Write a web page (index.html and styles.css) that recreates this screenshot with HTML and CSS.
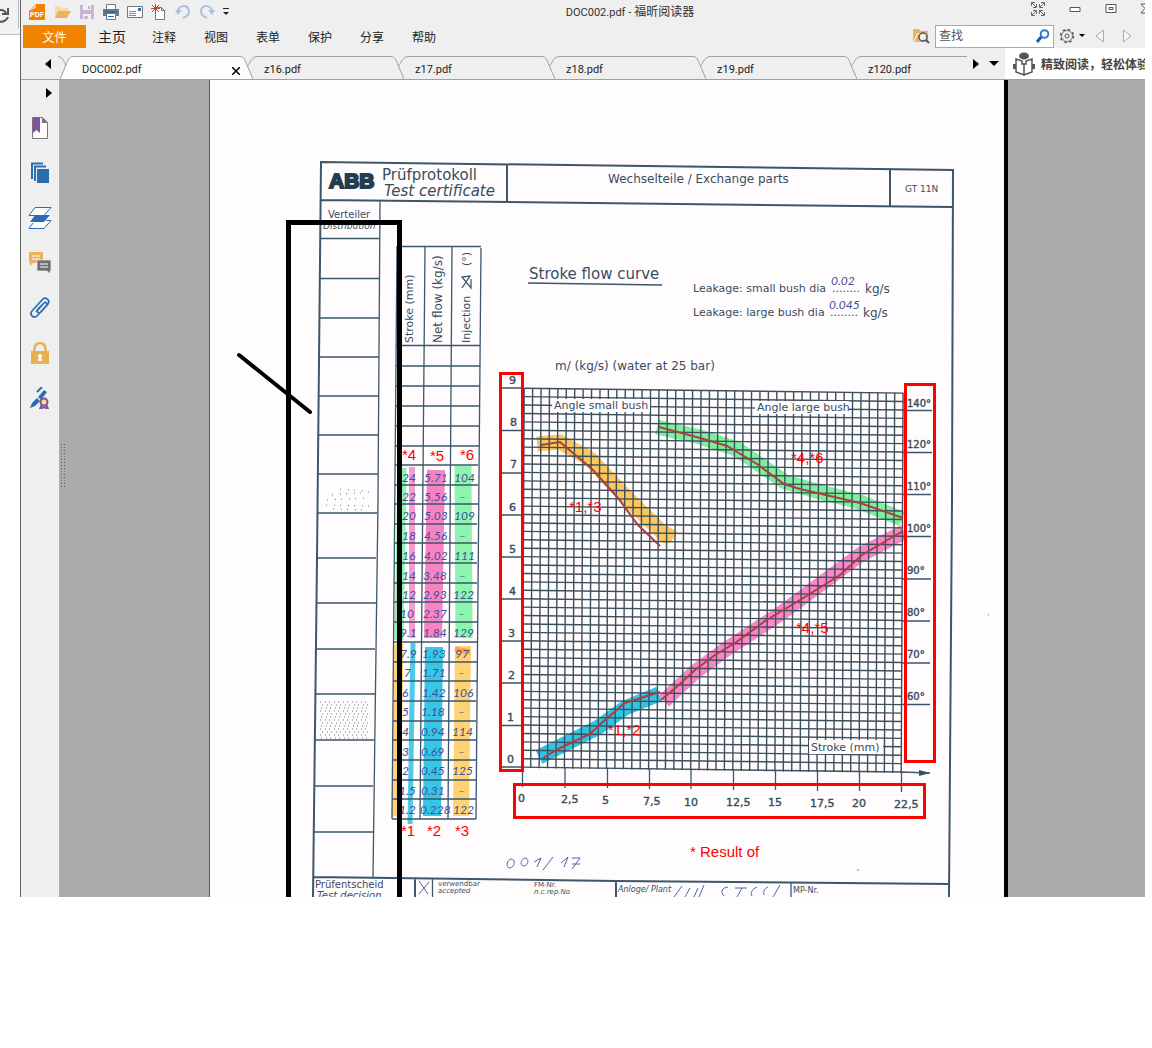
FILE: index.html
```
<!DOCTYPE html>
<html lang="zh-CN">
<head>
<meta charset="utf-8">
<title>DOC002.pdf - 福昕阅读器</title>
<link rel="stylesheet" href="styles.css">
</head>
<body>
<div class="desktop">
  <div class="behind">
    <div class="behind-bar">
      <svg width="20" height="34" viewBox="0 0 20 34"><path d="M-4 13C-2 9 4 9 6 13M8 8v6H2M8 17C6 22 0 23 -3 20" fill="none" stroke="#555" stroke-width="2"/><path d="M18.500 0v28" stroke="#bbb"/></svg>
    </div>
  </div>
  <div class="reader">
    <header class="title-bar">
      <div class="quick">
        <svg width="19" height="18" viewBox="0 0 19 18"><path d="M1 8L8 1h9v16H1z" fill="#f08300"/><path d="M1 8L8 1v4z" fill="#ffc98a"/><text x="2" y="14" class="logo-text">PDF</text></svg>
        <button aria-label="打开"><svg width="16" height="16" viewBox="0 0 16 16"><path d="M0 14V2h5l2 2h6v3H4z" fill="#f7d9a8"/><path d="M3 7h13l-4 7H0z" fill="#e9b35f"/></svg></button>
        <button aria-label="保存"><svg width="16" height="16" viewBox="0 0 16 16"><path d="M1 1h14v14H1z" fill="#c9b3d6"/><path d="M4 1h8v5H4zM4 10h8v5H4z" fill="#efefef"/><path d="M9 2h2v3H9zM5 12h4v3H5z" fill="#c9b3d6"/></svg></button>
        <button aria-label="打印"><svg width="16" height="16" viewBox="0 0 16 16"><path d="M3.500 0.500h9v5h-9z" fill="#fff" stroke="#777"/><path d="M0 5h16v7H0z" fill="#777"/><path d="M2 7h12v2H2z" fill="#2b6cb0"/><path d="M3.500 9.500h9v6h-9z" fill="#fff" stroke="#777"/><path d="M5 12.500h6" stroke="#2b6cb0"/></svg></button>
        <button aria-label="邮件"><svg width="16" height="16" viewBox="0 0 16 16"><path d="M.5 2.500h15v11H.5z" fill="#fff" stroke="#777"/><path d="M2 7.500h7M2 9.500h7M2 11.500h7" stroke="#888"/><path d="M11 4h3v3h-3z" fill="#2b6cb0"/></svg></button>
        <button aria-label="新建"><svg width="16" height="16" viewBox="0 0 16 16"><path d="M4.500 3.500h6l3 3v9h-9z" fill="#fff" stroke="#777"/><path d="M10.500 3.500v3h3" fill="none" stroke="#777"/><path d="M4.500 0v9M0 4.500h9M1 1l7 7M8 1L1 8" stroke="#d0402b"/></svg></button>
        <button aria-label="撤销"><svg width="16" height="16" viewBox="0 0 16 16"><path d="M3 7C4 1 13 0 14 7C14 11 11 13 8 14" fill="none" stroke="#a9c1dc" stroke-width="2"/><path d="M0 6h7l-4 5z" fill="#a9c1dc"/></svg></button>
        <button aria-label="重做"><svg width="16" height="16" viewBox="0 0 16 16"><path d="M13 7C12 1 3 0 2 7C2 11 5 13 8 14" fill="none" stroke="#a9c1dc" stroke-width="2"/><path d="M16 6H9l4 5z" fill="#a9c1dc"/></svg></button>
        <button aria-label="自定义"><svg width="6" height="8" viewBox="0 0 6 8"><path d="M0 .5h6" stroke="#222"/><path d="M0 4h6L3 7z" fill="#222"/></svg></button>
      </div>
      <div class="window-title"><span class="file-name">DOC002.pdf -</span> 福昕阅读器</div>
      <div class="window-buttons">
        <button aria-label="全屏"><svg width="14" height="14" viewBox="0 0 14 14"><path d="M.5 4V.5H4M1 1l4 4M2 5.500h3.500V2M13.500 4V.5H10M13 1L9 5M12 5.500H8.500V2M.5 10v3.500H4M1 13l4-4M2 8.500h3.500V12M13.500 10v3.500H10M13 13L9 9M12 8.500H8.500V12" fill="none" stroke="#667"/></svg></button>
        <button aria-label="最小化"><svg width="12" height="14" viewBox="0 0 12 14"><path d="M1 5.500h10v4H1z" fill="#fff" stroke="#555"/></svg></button>
        <button aria-label="最大化"><svg width="12" height="14" viewBox="0 0 12 14"><path d="M1 2.500h10v8H1zM4 5.500h4v2H4z" fill="#fff" stroke="#555"/></svg></button>
        <button aria-label="关闭"><svg width="4" height="14" viewBox="0 0 4 14"><path d="M4 2H0l4 4.500L0 11h4" fill="#fff" stroke="#555"/></svg></button>
      </div>
    </header>
    <nav class="menu-bar">
      <button class="file">文件</button>
      <button class="menu home">主页</button>
      <button class="menu">注释</button>
      <button class="menu">视图</button>
      <button class="menu">表单</button>
      <button class="menu">保护</button>
      <button class="menu">分享</button>
      <button class="menu">帮助</button>
      <div class="search-tools">
        <svg width="17" height="16" viewBox="0 0 17 16"><path d="M0 1h6l2 2h7v11H0z" fill="#e9b35f"/><path d="M1 14L4 6h10" stroke="#fff" fill="none"/><circle cx="10" cy="9" r="4" fill="#eee" stroke="#555" stroke-width="1.500"/><path d="M13 12l3 3" stroke="#555" stroke-width="2"/></svg>
        <label class="search">
          <input type="text" placeholder="查找" aria-label="查找">
          <svg width="14" height="14" viewBox="0 0 14 14"><path d="M1 13l5-6" stroke="#1c5fae" stroke-width="3"/><circle cx="8.500" cy="5" r="3.800" fill="#fff" stroke="#2f7fce" stroke-width="2"/></svg>
        </label>
        <button class="gear" aria-label="设置"><svg width="26" height="16" viewBox="0 0 26 16"><circle cx="8" cy="8" r="6.500" fill="none" stroke="#556" stroke-width="1.500" stroke-dasharray="2.600 2.500"/><circle cx="8" cy="8" r="5.500" fill="#efefef" stroke="#556" stroke-width=".8"/><circle cx="8" cy="8" r="2" fill="none" stroke="#556"/><path d="M20 6h6l-3 3z" fill="#000"/></svg></button>
        <button aria-label="上一个"><svg width="9" height="14" viewBox="0 0 9 14"><path d="M8.500 1v12L1 7z" fill="#f6f6f6" stroke="#aaa"/></svg></button>
        <button aria-label="下一个"><svg width="9" height="14" viewBox="0 0 9 14"><path d="M.5 1v12L8 7z" fill="#f6f6f6" stroke="#aaa"/></svg></button>
      </div>
    </nav>
    <div class="tab-bar">
      <button class="scroll-left" aria-label="向左"><svg width="6" height="10" viewBox="0 0 6 10"><path d="M6 0v10L0 5z"/></svg></button>
      <svg class="stub" width="9" height="23" viewBox="0 0 9 23"><path d="M0 .5C5 1 6 6 9 11" class="edge"/></svg>
      <div class="tabs">
        <div class="tab active">
          <svg width="13" height="23" viewBox="0 0 13 23"><path d="M0 23L6 9C8 4 9 .5 13 .5V23z" class="fill"/><path d="M0 23L6 9C8 4 9 .5 13 .5" class="edge"/></svg>
          <a href="#doc">DOC002.pdf</a>
          <button aria-label="关闭标签"><svg width="8" height="8" viewBox="0 0 8 8"><path d="M0 0l8 8M8 0L0 8" stroke="#000" stroke-width="1.500"/></svg></button>
          <svg width="13" height="23" viewBox="0 0 13 23"><path d="M0 .5C4 .5 5 4 7 9L13 23H0z" class="fill"/><path d="M0 .5C4 .5 5 4 7 9L13 23" class="edge"/></svg>
        </div>
        <div class="tab"><svg width="11" height="23" viewBox="0 0 11 23"><path d="M0 11C4 5 5 .5 11 .5" class="edge"/></svg><a href="#z16">z16.pdf</a><svg width="13" height="23" viewBox="0 0 13 23"><path d="M0 .5C4 .5 5 4 7 9L13 23" class="edge"/></svg></div>
        <div class="tab"><svg width="11" height="23" viewBox="0 0 11 23"><path d="M0 11C4 5 5 .5 11 .5" class="edge"/></svg><a href="#z17">z17.pdf</a><svg width="13" height="23" viewBox="0 0 13 23"><path d="M0 .5C4 .5 5 4 7 9L13 23" class="edge"/></svg></div>
        <div class="tab"><svg width="11" height="23" viewBox="0 0 11 23"><path d="M0 11C4 5 5 .5 11 .5" class="edge"/></svg><a href="#z18">z18.pdf</a><svg width="13" height="23" viewBox="0 0 13 23"><path d="M0 .5C4 .5 5 4 7 9L13 23" class="edge"/></svg></div>
        <div class="tab"><svg width="11" height="23" viewBox="0 0 11 23"><path d="M0 11C4 5 5 .5 11 .5" class="edge"/></svg><a href="#z19">z19.pdf</a><svg width="13" height="23" viewBox="0 0 13 23"><path d="M0 .5C4 .5 5 4 7 9L13 23" class="edge"/></svg></div>
        <div class="tab last"><svg width="11" height="23" viewBox="0 0 11 23"><path d="M0 11C4 5 5 .5 11 .5" class="edge"/></svg><a href="#z120">z120.pdf</a></div>
      </div>
      <div class="tab-tools">
        <button aria-label="向右"><svg width="6" height="10" viewBox="0 0 6 10"><path d="M0 0v10l6-5z"/></svg></button>
        <button aria-label="标签列表"><svg width="10" height="5" viewBox="0 0 10 5"><path d="M0 0h10L5 5z"/></svg></button>
      </div>
      <div class="banner">
        <svg width="22" height="24" viewBox="0 0 22 24"><ellipse cx="11" cy="4" rx="5" ry="3.500" fill="#555"/><path d="M3 7l6 2v3h4V9l6-2v13l-8 3-8-3zM11 12v10" fill="#fff" stroke="#555" stroke-width="1.500"/><path d="M0 12h3v5H0zM19 12h3v5h-3z" fill="#555"/></svg>
        <span>精致阅读，轻松体验</span>
      </div>
    </div>
    <main class="work">
      <aside class="side">
        <button class="expand" aria-label="展开"><svg width="6" height="10" viewBox="0 0 6 10"><path d="M0 0v10l6-5z"/></svg></button>
        <button aria-label="书签"><svg width="18" height="22" viewBox="0 0 18 22"><path d="M1.500.500h10l5 5v16h-15z" fill="#fff" stroke="#777"/><path d="M11 0l6 6h-6z" fill="#777"/><path d="M2 0h7v16l-3.500-3L2 16z" fill="#8353a3"/></svg></button>
        <button aria-label="页面"><svg width="20" height="22" viewBox="0 0 20 22"><path d="M2 17V1.500h11M5 19V4.500h11" fill="none" stroke="#2c6cb0" stroke-width="2"/><path d="M7 7h12v14H7z" fill="#2c6cb0"/></svg></button>
        <button aria-label="图层"><svg width="24" height="22" viewBox="0 0 24 22"><path d="M7 13.500h16l-7 8H1z" fill="#fff" stroke="#2c6cb0"/><path d="M7 7.500h16l-7 8H1z" fill="#2c6cb0" stroke="#fff"/><path d="M7 .5h16l-7 8H1z" fill="#fff" stroke="#2c6cb0"/></svg></button>
        <button aria-label="注释"><svg width="22" height="22" viewBox="0 0 22 22"><path d="M0 0h14v11H4l-3 3v-3H0z" fill="#e9b35f"/><path d="M3 4h8M3 7h8" stroke="#fff"/><path d="M8 8h14v11h-1v3l-3-3H8z" fill="#707070" stroke="#efefef" stroke-width=".7"/><path d="M11 12h8M11 15h8" stroke="#fff"/></svg></button>
        <button aria-label="附件"><svg width="20" height="22" viewBox="0 0 20 22"><path d="M6 15L14 6C16 4 18 7 16 9L7 19C4 22-1 18 2 14L12 3C15-1 21 3 18 7L11 15C9 17 6 15 8 12L13 7" fill="none" stroke="#2c6cb0" stroke-width="1.700"/></svg></button>
        <button aria-label="安全"><svg width="18" height="22" viewBox="0 0 18 22"><path d="M3.500 10V6.500a5.500 5.500 0 0 1 11 0v3.500" fill="none" stroke="#e9b04f" stroke-width="2.500"/><path d="M0 9h18v13H0z" fill="#e9b04f"/><circle cx="9" cy="14" r="2" fill="#fff"/><path d="M8 14h2l1 5H7z" fill="#fff"/></svg></button>
        <button aria-label="签名"><svg width="20" height="22" viewBox="0 0 20 22"><path d="M0 21l2-5 5-5 3 3-5 5zM8 10l6-7 3 2-6 8z" fill="#2c6cb0"/><path d="M7 5l5-5" stroke="#2c6cb0" stroke-width="2"/><path d="M12 17l-2 5 4-2 4 2-2-5" fill="none" stroke="#8353a3" stroke-width="2"/><circle cx="14" cy="15" r="3.500" fill="#ffe27a" stroke="#8353a3" stroke-width="2"/></svg></button>
      </aside>
      <section class="viewer">
        <div class="grip"></div>
        <svg class="sheet" width="799" height="817" viewBox="209 80 799 817" role="img" aria-label="Prüfprotokoll">
          <path d="M209 80h799v817H209z" fill="#fefcfd"/>
          <path d="M209.500 80v817" stroke="#555"/>
          <path d="M1004 80h4v817h-4z"/>

          <!-- certificate frame -->
          <g class="rule heavy">
            <path d="M313 897L317 560L321 162L953 170L952 500L949 897M321 200L952 207M507 164v37M890 169v37M313 877L615 881L949 884M415 878v19M616 881v16"/>
          </g>
          <g class="rule">
            <path d="M380 201L378 500L373 877M321 238.500h58M320 278.500h59M320 318h59M319 357h60M319 396h59M318 435h60M318 474h60M317 513h60M317 558h59M317 603h59M316 649h59M316 694h59M315 740h59M315 786h58M314 832h59M432.500 879v18M791 883v14"/>
          </g>
          <path d="M340 489l28 2M332 495l38-3M327 500l42-2M326 505l44 1M333 509l32 1" class="speckle sparse"/>
          <path d="M320 702h48M322 705h47M321 708h47M320 711h48M322 714h46M321 717h47M320 720h48M322 723h46M321 726h47M320 729h48M322 732h46M320 735h48M321 738h47" class="speckle"/>

          <g class="print">
            <text x="329" y="188" class="abb">ABB</text>
            <text x="382" y="180" class="t15">Prüfprotokoll</text>
            <text x="384" y="196" class="t15 it">Test certificate</text>
            <text x="608" y="183" class="t12">Wechselteile / Exchange parts</text>
            <text x="905" y="192" class="t9">GT 11N</text>
            <text x="328" y="218" class="t10">Verteiler</text>
            <text x="323" y="229" class="t9 it">Distribution</text>
            <text x="529" y="279" class="t15">Stroke flow curve</text>
            <text x="693" y="292" class="t11">Leakage: small bush dia</text>
            <text x="832" y="292" class="t11">........</text>
            <text x="865" y="293" class="t12">kg/s</text>
            <text x="693" y="316" class="t11">Leakage: large bush dia</text>
            <text x="830" y="316" class="t11">........</text>
            <text x="863" y="317" class="t12">kg/s</text>
            <text x="555" y="370" class="t12">m/ (kg/s) (water at 25 bar)</text>
            <text transform="translate(413 343) rotate(-90)" class="t11">Stroke (mm)</text>
            <text transform="translate(442 343) rotate(-90)" class="t12">Net flow (kg/s)</text>
            <text transform="translate(470 343) rotate(-90)" class="t11">Injection</text>
            <text transform="translate(470 266) rotate(-90)" class="t11">(°)</text>
            <text x="315" y="888" class="t10">Prüfentscheid</text>
            <text x="317" y="899" class="t10 it">Test decision</text>
            <text x="438" y="886" class="t7">verwendbar</text>
            <text x="438" y="893" class="t7 it">accepted</text>
            <text x="534" y="887" class="t7">FM-Nr.</text>
            <text x="534" y="894" class="t7 it">n.c.rep.No</text>
            <text x="618" y="892" class="t8 it">Anloge/ Plant</text>
            <text x="793" y="893" class="t8">MP-Nr.</text>
          </g>
          <path d="M528 283l134 2M462 288L470 276L462 277L471 288V279" class="rule"/>

          <!-- marker strokes in the measurement table -->
          <g fill="none">
            <path d="M402 468L399 640" stroke="#8df5ae" stroke-width="9"/>
            <path d="M463 466L464 638" stroke="#8df5ae" stroke-width="17"/>
            <path d="M412 467L412 638" stroke="#f79bd0" stroke-width="6"/>
            <path d="M436 470L433 638" stroke="#f783c4" stroke-width="18"/>
            <path d="M399 644L396 816" stroke="#ffd274" stroke-width="9"/>
            <path d="M463 646L461 816" stroke="#ffd274" stroke-width="16"/>
            <path d="M413 643L410 824" stroke="#4ccbe8" stroke-width="5"/>
            <path d="M434 647L432 816" stroke="#36c6e6" stroke-width="18"/>
            <path d="M455 649l15 3" stroke="#ff9f45" stroke-width="5"/>
          </g>
          <g class="rule">
            <path d="M397 246L392 819M425 247L420 819M452 247L448 819M481 248L476 819"/>
            <path d="M397 246.500h84M396 345.500h84M396 366h84M396 386h84M396 406h84M395 426h84M395 446h84M395 465h83M395 485h83M394 504h84M394 524h83M394 543h83M394 563h83M394 583h83M394 602h83M394 622h83M393 642h84M393 662h84M393 681h84M393 701h83M393 721h83M392 740h84M392 760h84M392 780h84M392 799h84M392 819h84"/>
          </g>
          <g class="hand">
            <text><tspan x="402" y="482">24</tspan><tspan x="402" y="501">22</tspan><tspan x="402" y="520">20</tspan><tspan x="402" y="540">18</tspan><tspan x="402" y="560">16</tspan><tspan x="402" y="580">14</tspan><tspan x="402" y="599">12</tspan><tspan x="400" y="618">10</tspan><tspan x="400" y="637">9.1</tspan><tspan x="400" y="658">7.9</tspan><tspan x="404" y="677">7</tspan><tspan x="402" y="697">6</tspan><tspan x="402" y="716">5</tspan><tspan x="402" y="736">4</tspan><tspan x="402" y="756">3</tspan><tspan x="402" y="775">2</tspan><tspan x="399" y="795">1.5</tspan><tspan x="399" y="814">1.2</tspan></text>
            <text><tspan x="424" y="482">5.71</tspan><tspan x="424" y="501">5.56</tspan><tspan x="424" y="520">5.03</tspan><tspan x="424" y="540">4.56</tspan><tspan x="424" y="560">4.02</tspan><tspan x="423" y="580">3.48</tspan><tspan x="423" y="599">2.93</tspan><tspan x="423" y="618">2.37</tspan><tspan x="423" y="637">1.84</tspan><tspan x="422" y="658">1.93</tspan><tspan x="422" y="677">1.71</tspan><tspan x="422" y="697">1.42</tspan><tspan x="421" y="716">1.18</tspan><tspan x="421" y="736">0.94</tspan><tspan x="421" y="756">0.69</tspan><tspan x="421" y="775">0.45</tspan><tspan x="421" y="795">0.31</tspan><tspan x="420" y="814">0.228</tspan></text>
            <text><tspan x="454" y="482">104</tspan><tspan x="459" y="501">–</tspan><tspan x="454" y="520">109</tspan><tspan x="459" y="540">–</tspan><tspan x="454" y="560">111</tspan><tspan x="459" y="580">–</tspan><tspan x="453" y="599">122</tspan><tspan x="458" y="618">–</tspan><tspan x="453" y="637">129</tspan><tspan x="455" y="658">97</tspan><tspan x="458" y="677">–</tspan><tspan x="453" y="697">106</tspan><tspan x="458" y="716">–</tspan><tspan x="452" y="736">114</tspan><tspan x="458" y="756">–</tspan><tspan x="452" y="775">125</tspan><tspan x="458" y="795">–</tspan><tspan x="453" y="814">122</tspan></text>
            <text x="831" y="285">0.02</text>
            <text x="829" y="309">0.045</text>
          </g>
          <g class="ink">
            <path d="M511 859c-5 2-5 9-1 9c5-1 6-9 1-9M525 858c-5 2-5 8-1 8c5-1 5-8 1-8M534 862l7-4-4 9M553 857l-10 13M561 863l7-6-4 10M572 858h8l-8 11M572 864h8"/>
            <path d="M419 881l9 13M429 882l-10 12M682 886l-8 11M690 888l-5 9M704 885l-5 12M698 888l-4 9M728 887c-6 1-8 4-4 9M735 888h12M742 888l-5 9M757 887c-5 2-7 6-5 9M768 887c-4 2-5 5-4 8M780 885l-7 12"/>
          </g>

          <!-- highlighted curves lie under the chart grid -->
          <g class="marker">
            <path d="M537 444L560 442L590 459L630 501L666 536L671 528" stroke="#fbc75e"/>
            <path d="M657 427L700 437L737 449L785 482L820 492L860 502L902 519" stroke="#7cf09c"/>
            <path d="M664 701L695 672L725 650L780 614L860 555L904 532" stroke="#fa86c8"/>
            <path d="M539 757L597 728L625 708L659 694" stroke="#2fc4e4"/>
          </g>
          <g transform="matrix(1 .013 -.005 1 524 388)" class="grid">
            <path d="M-.5 190H380" stroke-width="380" stroke-dasharray="1.400 7.020"/>
            <path d="M190-.5V380" stroke-width="379" stroke-dasharray="1.400 7.020"/>
          </g>
          <path d="M552 399h98v13h-98zM755 401h94v13h-94zM809 740h74v14h-74z" fill="#fefcfd"/>
          <path d="M500 388h24M500 430.500h24M500 473h24M500 515h24M500 557h24M499 599h24M499 641h24M499 683h24M499 725.500h24M499 767h24M903 410.500h29M903 452.500h29M903 494.500h28M903 536.500h28M902 579h29M902 621h28M902 663h28M902 704.500h28M522.500 767v20M565 768v20M607.500 768v20M649.500 769v20M691 769v20M733.500 770v20M775.500 770v20M817.500 771v20M859.500 771v20M901.500 772v20M901 772l29 1" class="rule"/>
          <path d="M919 770l11 3-11 3z" fill="#355064"/>
          <g class="print">
            <text x="554" y="409" class="t11">Angle small bush</text>
            <text x="757" y="411" class="t11">Angle large bush</text>
            <text x="811" y="751" class="t11">Stroke (mm)</text>
            <text class="t11 num"><tspan x="509" y="384">9</tspan><tspan x="510" y="426">8</tspan><tspan x="510" y="468">7</tspan><tspan x="509" y="511">6</tspan><tspan x="509" y="553">5</tspan><tspan x="509" y="595">4</tspan><tspan x="508" y="637">3</tspan><tspan x="508" y="679">2</tspan><tspan x="507" y="721">1</tspan><tspan x="507" y="763">0</tspan></text>
            <text class="t10 num"><tspan x="907" y="407">140°</tspan><tspan x="907" y="448">120°</tspan><tspan x="907" y="490">110°</tspan><tspan x="907" y="532">100°</tspan><tspan x="907" y="574">90°</tspan><tspan x="907" y="616">80°</tspan><tspan x="907" y="658">70°</tspan><tspan x="907" y="700">60°</tspan></text>
            <text class="t11 num"><tspan x="518" y="802">0</tspan><tspan x="561" y="803">2,5</tspan><tspan x="602" y="804">5</tspan><tspan x="643" y="805">7,5</tspan><tspan x="684" y="806">10</tspan><tspan x="726" y="806">12,5</tspan><tspan x="768" y="806">15</tspan><tspan x="810" y="807">17,5</tspan><tspan x="852" y="807">20</tspan><tspan x="894" y="808">22,5</tspan></text>
          </g>
          <g class="curve">
            <path d="M541 445L560 442L592 469L618 498L638 525L660 546"/>
            <path d="M659 427L700 438L727 446L757 464L784 484L800 489L860 503L903 518"/>
            <path d="M661 700L680 684L695 670L715 655L735 643L765 621L800 600L840 575L862 555L903 531"/>
            <path d="M543 758L560 748L590 734L605 720L625 703L660 692"/>
          </g>

          <!-- reviewer's annotations -->
          <g class="notes">
            <text x="402" y="460">*4</text><text x="430" y="461">*5</text><text x="460" y="460">*6</text>
            <text x="401" y="836">*1</text><text x="427" y="836">*2</text><text x="455" y="836">*3</text>
            <text x="791" y="463">*4,*6</text><text x="569" y="512">*1,*3</text><text x="796" y="633">*4,*5</text><text x="608" y="735">*1,*2</text>
            <text x="690" y="857">* Result of</text>
          </g>
          <path d="M500.500 373.500h22v397h-22zM905.500 384.500h29v377h-29zM514.500 784.500h410v33h-410z" fill="none" stroke="#f00" stroke-width="3"/>
          <path d="M288.500 222.500h111v686h-111z" fill="none" stroke="#000" stroke-width="5"/>
          <path d="M239 355l71 57" stroke="#000" stroke-width="4" stroke-linecap="round"/>
          <path d="M988 615h1M858 869v2" stroke="#777"/>
        </svg>
      </section>
    </main>
  </div>
</div>
</body>
</html>
```
FILE: styles.css
```
* { box-sizing: border-box; }
body { margin: 0; background: #fff; font-family: "Roboto", "Noto Sans CJK SC", sans-serif; font-size: 12px; color: #222; }
button { border: 0; padding: 0; margin: 0; background: none; font: inherit; color: inherit; display: flex; align-items: center; justify-content: center; }
svg { display: block; flex: none; }
a { color: inherit; text-decoration: none; }

.desktop { display: flex; padding-right: 7px; }
.behind { flex: 0 0 20px; }
.behind-bar { height: 35px; overflow: hidden; background: #f2f2f2; border-bottom: 1px solid #bbb; }
.reader { flex: 1; min-width: 0; border-left: 1px solid #666; background: #efefef; }

.title-bar { display: flex; justify-content: space-between; height: 24px; padding-left: 7px; overflow: hidden; }
.quick { display: flex; align-items: center; gap: 8px; }
.window-title { line-height: 24px; color: #333; white-space: nowrap; }
.file-name { font-size: 11px; }
.window-buttons { display: flex; gap: 24px; padding-top: 2px; align-items: flex-start; }
.logo-text { font: bold 7px "Liberation Sans", sans-serif; fill: #fff; }

.menu-bar { display: flex; align-items: center; height: 24px; padding-left: 2px; }
.file { width: 63px; height: 23px; background: #f08300; color: #fff; }
.menu { width: 52px; height: 23px; }
.home { font-size: 14px; }
.search-tools { display: flex; align-items: center; gap: 5px; margin-left: auto; padding-right: 13px; }
.search { display: flex; align-items: center; width: 119px; height: 23px; padding: 0 3px; background: #fff; border: 1px solid #aaa; }
.search input { flex: 1; min-width: 0; border: 0; padding: 0; background: none; font: inherit; outline: 0; }
.search input::placeholder { color: #555; opacity: 1; }
.gear { margin-right: 5px; }
.search-tools button:last-child { margin-left: 14px; }

.tab-bar { display: flex; align-items: flex-end; height: 32px; border-bottom: 1px solid #a0a0a0; }
.scroll-left { width: 37px; height: 31px; padding-left: 16px; }
.stub { margin-right: -7px; }
.edge { fill: none; stroke: #a0a0a0; }
.fill { fill: #fdfdfd; }
.tabs { display: flex; flex: 1; min-width: 0; }
.tab { display: flex; width: 157px; height: 23px; margin-right: -6px; }
.tab a { flex: 1; padding: 1px 0 0 6px; line-height: 23px; font-size: 11px; border-top: 1px solid #a0a0a0; }
.active { width: 193px; }
.active a, .active > button { background: #fdfdfd; }
.tab.active a { padding-left: 9px; }
.active > button { border-top: 1px solid #a0a0a0; padding: 5px 0 0; }
.last { width: 116px; margin-right: 0; }
.tab-tools { display: flex; align-items: center; gap: 10px; height: 31px; padding-right: 6px; }
.banner { display: flex; align-items: center; gap: 6px; width: 140px; height: 31px; padding-left: 8px; overflow: hidden; background: #fff; font-weight: bold; white-space: nowrap; color: #444; }

.work { display: flex; }
.side { display: flex; flex-direction: column; flex: 0 0 38px; }
.side button { height: 45px; }
.side .expand { height: 25px; padding-left: 17px; }
.viewer { display: flex; align-items: center; flex: 1; min-width: 0; background: #ababab; }
.grip { width: 5px; height: 44px; margin: 0 auto 48px 1px; background: radial-gradient(#666 1px, transparent 1px) 0 0 / 3px 3px; }
.sheet { overflow: visible; margin-left: 7px; margin-right: auto; }

.rule { fill: none; stroke: #3d566a; stroke-width: 1.300px; }
.heavy { stroke-width: 2px; }
.grid { fill: none; stroke: #3c4f5c; }
.speckle { stroke: #777; stroke-dasharray: 1 4 1 3; }
.sparse { stroke-dasharray: 1 7 1 5; }
.print { font-family: "DejaVu Sans", sans-serif; fill: #3a4d5e; }
.abb { font: bold 21px "Liberation Sans", sans-serif; stroke: #243c50; stroke-width: 2px; fill: #243c50; }
.t7 { font-size: 7px; }
.t8 { font-size: 8px; }
.t9 { font-size: 9px; }
.t10 { font-size: 10px; }
.t11 { font-size: 11px; }
.t12 { font-size: 12px; }
.t15 { font-size: 15px; }
.it { font-style: italic; }
.num { stroke: #3a4d5e; stroke-width: .4px; }
.hand { font: italic 12px "Lato", sans-serif; fill: #3f4f98; }
.ink { fill: none; stroke: #4a64b0; }
.marker { fill: none; stroke-width: 15px; stroke-linejoin: round; }
.curve { fill: none; stroke: #a8403f; stroke-width: 2px; }
.notes { font: 15px "Liberation Sans", sans-serif; fill: #f00; }
```
